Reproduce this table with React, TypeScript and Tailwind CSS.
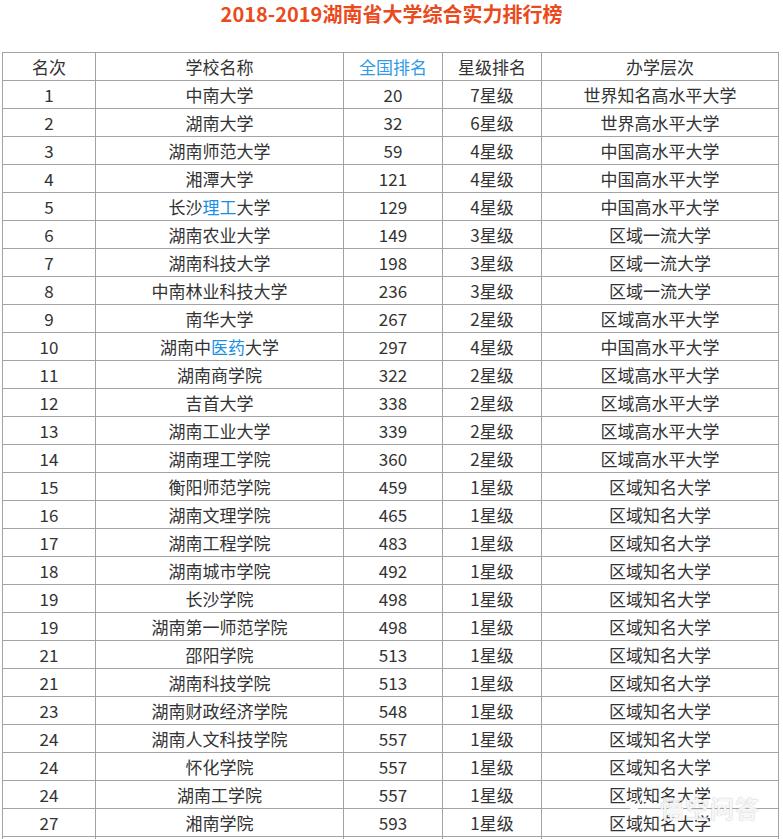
const rows: [string, React.ReactNode, string, string, string][] = [
  ["1", "中南大学", "20", "7星级", "世界知名高水平大学"],
  ["2", "湖南大学", "32", "6星级", "世界高水平大学"],
  ["3", "湖南师范大学", "59", "4星级", "中国高水平大学"],
  ["4", "湘潭大学", "121", "4星级", "中国高水平大学"],
  ["5", <>长沙<span className="text-[#1a8fe3]">理工</span>大学</>, "129", "4星级", "中国高水平大学"],
  ["6", "湖南农业大学", "149", "3星级", "区域一流大学"],
  ["7", "湖南科技大学", "198", "3星级", "区域一流大学"],
  ["8", "中南林业科技大学", "236", "3星级", "区域一流大学"],
  ["9", "南华大学", "267", "2星级", "区域高水平大学"],
  ["10", <>湖南中<span className="text-[#1a8fe3]">医药</span>大学</>, "297", "4星级", "中国高水平大学"],
  ["11", "湖南商学院", "322", "2星级", "区域高水平大学"],
  ["12", "吉首大学", "338", "2星级", "区域高水平大学"],
  ["13", "湖南工业大学", "339", "2星级", "区域高水平大学"],
  ["14", "湖南理工学院", "360", "2星级", "区域高水平大学"],
  ["15", "衡阳师范学院", "459", "1星级", "区域知名大学"],
  ["16", "湖南文理学院", "465", "1星级", "区域知名大学"],
  ["17", "湖南工程学院", "483", "1星级", "区域知名大学"],
  ["18", "湖南城市学院", "492", "1星级", "区域知名大学"],
  ["19", "长沙学院", "498", "1星级", "区域知名大学"],
  ["19", "湖南第一师范学院", "498", "1星级", "区域知名大学"],
  ["21", "邵阳学院", "513", "1星级", "区域知名大学"],
  ["21", "湖南科技学院", "513", "1星级", "区域知名大学"],
  ["23", "湖南财政经济学院", "548", "1星级", "区域知名大学"],
  ["24", "湖南人文科技学院", "557", "1星级", "区域知名大学"],
  ["24", "怀化学院", "557", "1星级", "区域知名大学"],
  ["24", "湖南工学院", "557", "1星级", "区域知名大学"],
  ["27", "湘南学院", "593", "1星级", "区域知名大学"],
];

const cell = "h-[28px] border border-[#a3a3a3] p-0 text-center align-middle leading-[27px]";

export default function App() {
  return (
    <div className="relative h-[839px] w-[783px] overflow-hidden bg-white text-[17px] text-[#333] [font-family:'Noto_Sans_CJK_SC',sans-serif]">
      <h1 className="pt-[1px] text-center text-[20px] font-bold leading-[26px] text-[#ea4a1c]">
        2018-2019湖南省大学综合实力排行榜
      </h1>
      <table className="ml-[2px] mt-[25px] w-[777px] table-fixed border-collapse border border-[#444]">
        <colgroup>
          <col className="w-[93px]" />
          <col className="w-[248px]" />
          <col className="w-[99px]" />
          <col className="w-[99px]" />
          <col />
        </colgroup>
        <thead>
          <tr>
            <th className={`${cell} font-normal`}>名次</th>
            <th className={`${cell} font-normal`}>学校名称</th>
            <th className={`${cell} font-normal text-[#2f9ae6]`}>全国排名</th>
            <th className={`${cell} font-normal`}>星级排名</th>
            <th className={`${cell} font-normal`}>办学层次</th>
          </tr>
        </thead>
        <tbody>
          {rows.map((r, i) => (
            <tr key={i}>
              {r.map((v, j) => <td key={j} className={cell}>{v}</td>)}
            </tr>
          ))}
          {/* next row, below the fold */}
          <tr>
            <td className={cell} /><td className={cell} /><td className={cell} /><td className={cell} /><td className={cell} />
          </tr>
        </tbody>
      </table>

      {/* watermark */}
      <div className="pointer-events-none absolute left-[624px] top-[796px] flex items-center gap-[8px] text-white/90 [text-shadow:0_0_1px_rgba(0,0,0,0.35)]">
        <svg width="28" height="24" viewBox="0 0 28 24" fill="none" stroke="rgba(255,255,255,0.95)" strokeWidth="2">
          <circle cx="10" cy="8" r="5" />
          <path d="M3 20c2-5 12-5 14 0" />
          <path d="M18 5l6 0M18 10l6 0" />
        </svg>
        <span className="text-[24px] font-bold leading-none tracking-[1px]">悟空问答</span>
      </div>
    </div>
  );
}
